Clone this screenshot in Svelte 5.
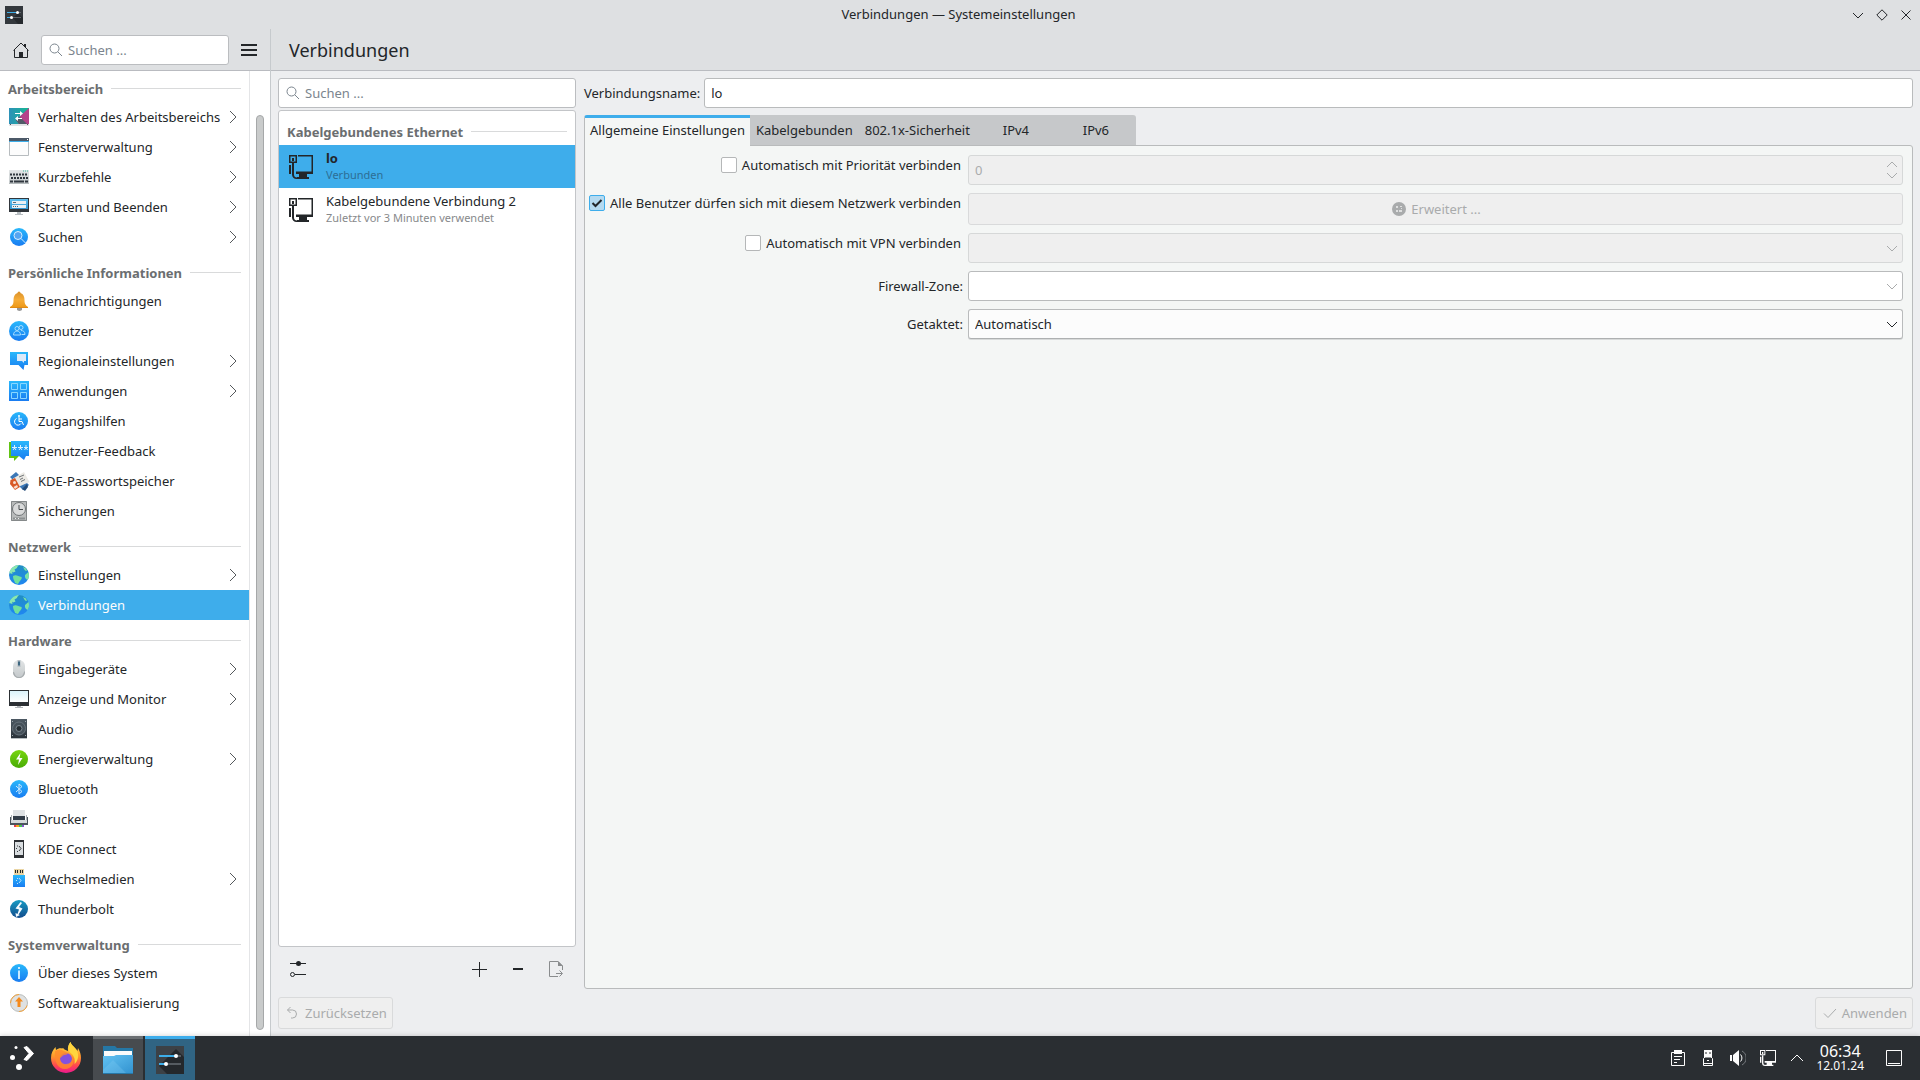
<script>
	const sections = [
		{
			title: 'Arbeitsbereich',
			items: [
				{ label: 'Verhalten des Arbeitsbereichs', icon: 'workspace', more: true },
				{ label: 'Fensterverwaltung', icon: 'window', more: true },
				{ label: 'Kurzbefehle', icon: 'keyboard', more: true },
				{ label: 'Starten und Beenden', icon: 'startup', more: true },
				{ label: 'Suchen', icon: 'search', more: true }
			]
		},
		{
			title: 'Persönliche Informationen',
			items: [
				{ label: 'Benachrichtigungen', icon: 'bell' },
				{ label: 'Benutzer', icon: 'users' },
				{ label: 'Regionaleinstellungen', icon: 'locale', more: true },
				{ label: 'Anwendungen', icon: 'apps', more: true },
				{ label: 'Zugangshilfen', icon: 'access' },
				{ label: 'Benutzer-Feedback', icon: 'feedback' },
				{ label: 'KDE-Passwortspeicher', icon: 'wallet' },
				{ label: 'Sicherungen', icon: 'backup' }
			]
		},
		{
			title: 'Netzwerk',
			items: [
				{ label: 'Einstellungen', icon: 'globe', more: true },
				{ label: 'Verbindungen', icon: 'globe' }
			]
		},
		{
			title: 'Hardware',
			items: [
				{ label: 'Eingabegeräte', icon: 'mouse', more: true },
				{ label: 'Anzeige und Monitor', icon: 'monitor', more: true },
				{ label: 'Audio', icon: 'audio' },
				{ label: 'Energieverwaltung', icon: 'power', more: true },
				{ label: 'Bluetooth', icon: 'bluetooth' },
				{ label: 'Drucker', icon: 'printer' },
				{ label: 'KDE Connect', icon: 'phone' },
				{ label: 'Wechselmedien', icon: 'usb', more: true },
				{ label: 'Thunderbolt', icon: 'thunderbolt' }
			]
		},
		{
			title: 'Systemverwaltung',
			items: [
				{ label: 'Über dieses System', icon: 'info' },
				{ label: 'Softwareaktualisierung', icon: 'update' }
			]
		}
	];

	const connections = [
		{ name: 'lo', status: 'Verbunden' },
		{ name: 'Kabelgebundene Verbindung 2', status: 'Zuletzt vor 3 Minuten verwendet' }
	];

	const tabs = ['Allgemeine Einstellungen', 'Kabelgebunden', '802.1x-Sicherheit', 'IPv4', 'IPv6'];

	let page = $state('Verbindungen');
	let connection = $state('lo');
	let tab = $state(tabs[0]);
	let connectionName = $state('lo');
	let autoConnect = $state(false);
	let allUsers = $state(true);
	let autoVpn = $state(false);
</script>

<svelte:head>
	<title>Verbindungen — Systemeinstellungen</title>
</svelte:head>

{#snippet magnifier()}
	<svg class="magnifier" width="14" height="14" viewBox="0 0 14 14" fill="none" stroke="currentColor">
		<circle cx="5.5" cy="5.5" r="4.5" />
		<path d="M8.8 8.8 13 13" />
	</svg>
{/snippet}

{#snippet chevron(dir)}
	<svg class="chevron" width="12" height="7" viewBox="0 0 12 7" fill="none" stroke="currentColor">
		<path d={dir === 'up' ? 'M1 6 6 1l5 5' : 'M1 1l5 5 5-5'} />
	</svg>
{/snippet}

{#snippet wired(size)}
	<svg width={size} height={size} viewBox="0 0 24 24" fill="currentColor">
		<path d="M0 0h8v8H0zM1.500 1.500v5h5v-5z" fill-rule="evenodd" />
		<path d="M3 3h2v3H3zM0 10h2v9H0zM3 8h2v11.500A3 3 0 0 0 8 22.500h2V24H7.500A4.500 4.500 0 0 1 3 19.500z" />
		<path d="M9 0h15v19H7v-2.500h15.500V1.500H9zM10 19h8v3h2v2H8v-2h2z" />
	</svg>
{/snippet}

{#snippet icon(name)}
	<svg class="icon" width="22" height="22" viewBox="0 0 22 22" fill="none">
		{#if name === 'workspace'}
			<path d="M1 2h20v16H1z" fill="url(#teal)" />
			<path d="M21 2v16H11l-3-4z" fill="#b5438a" />
			<path d="M8 14l4-3 7 7H11z" fill="#515a68" />
			<path d="M1 18h20v2H1z" fill="#e3e5e7" />
			<path d="M2 18h1v1H2zM19 18h1v1h-1z" fill="#555" />
			<path d="M7 7.500h6M14 12.500H9" stroke="#fff" />
			<path d="M12 5l3 2.500-3 2.500zM10 10l-3 2.500 3 2.500z" fill="#fff" />
		{:else if name === 'window'}
			<path d="M1.500 2.500h19v17h-19z" fill="#fcfcfc" stroke="#b7bcbf" />
			<path d="M1 2h20v3H1z" fill="#4c5968" />
			<path d="M1 5h20v1H1z" fill="#3daee9" />
			<path d="M19 3h1v1h-1z" fill="#fff" />
		{:else if name === 'keyboard'}
			<path d="M1 4h20v14H1z" fill="url(#silver)" />
			<path d="M15 5h1M17 5h1M19 5h1" stroke="#3bb89d" />
			<path d="M2 8.500h18M3 12h17" stroke="#30373e" stroke-width="2" stroke-dasharray="2 1" />
			<path d="M2 15.500h3m1 0h10m1 0h3" stroke="#30373e" stroke-width="2" />
			<path d="M1 17.500h20" stroke="#b4babb" />
		{:else if name === 'startup'}
			<path d="M1 2h20v14H1z" fill="#31363b" />
			<path d="M2 3h18v10H2z" fill="url(#sky)" />
			<path d="M4 5h14v3H4zM4 9h14v3H4z" fill="#e9f0f3" />
			<path d="M5 6.500h3M5 10.500h1m1 0h1m1 0h1" stroke="#586977" />
			<path d="M9 16h4v2h2v1H7v-1h2z" fill="#b7bdc1" />
		{:else if name === 'search'}
			<circle cx="11" cy="11" r="9" fill="url(#blue)" />
			<circle cx="10" cy="9.500" r="4" fill="#55a5f1" stroke="#d7eeff" />
			<path d="M13 12.500l4.500 4.500" stroke="#d7eeff" />
		{:else if name === 'bell'}
			<path d="M9 18h5v1.500a2.500 1.500 0 0 1-5 0z" fill="#979797" />
			<path d="M9.500 3a1.500 1.500 0 0 1 3 0c3 1 4 4 4 7 0 4 1 5 3.500 7v1H2v-1c3-2 3.500-3 3.500-7 0-3 1-6 4-7z" fill="url(#orange)" />
			<path d="M2 17h18v1H2z" fill="#e18a12" />
		{:else if name === 'users'}
			<circle cx="11" cy="11" r="10" fill="url(#blue)" />
			<g stroke="#a6dcff">
				<circle cx="9" cy="8.500" r="2" />
				<circle cx="13" cy="7.500" r="2" />
				<path d="M5.500 15c0-3 2-4 3.500-4s3.500 1 3.500 4zM13 10.500c2 0 4 1 4 4h-3.500" />
			</g>
		{:else if name === 'locale'}
			<path d="M2 2h18v13h-3.500l-1 5-5-5H2z" fill="url(#blue)" />
			<path d="M9 4h9v7h-2v2l-2-2H9z" fill="#dbeaf9" />
		{:else if name === 'apps'}
			<path d="M1 1h20v20H1z" fill="url(#blue)" />
			<path d="M3.500 3.500h6v6h-6zM12.500 3.500h6v6h-6zM3.500 12.500h6v6h-6zM12.500 12.500h6v6h-6z" stroke="#89d7ff" />
		{:else if name === 'access'}
			<circle cx="11" cy="11" r="9" fill="url(#blue)" />
			<path d="M8.500 8.500a3.500 3.500 0 1 0 4.500 5" stroke="#fff" />
			<path d="M11 7v4.500h3l1.500 3.500M11 9h3" stroke="#fff" />
			<circle cx="11" cy="6" r="1" fill="#fff" />
		{:else if name === 'feedback'}
			<path d="M1 2h3v14h7l-5 5v-3H1z" fill="#62c413" />
			<path d="M3 1h18v15h-3l-2 4-5-4H3z" fill="url(#blue)" />
			<path d="M4 7.500h5M10 7.500h5M16 7.500h4M6.500 5v4M12.500 5v4M18 5v4M5 10l1.500-2L8 10M11 10l1.500-2 1.500 2M16.500 10 18 8l1.500 2" stroke="#d7f1ff" />
		{:else if name === 'wallet'}
			<path d="M2 7 8 2l13 13-6 5z" fill="#3c78b7" />
			<path d="M5 8.500 16 2l5.500 10L10 17z" fill="#eceae5" />
			<path d="M2.500 10 7 8l5 9-5 3-5-6z" fill="#d95a27" />
			<circle cx="6.500" cy="12.500" r="1.500" fill="#f7dfd2" />
			<path d="M5.500 17l3.500-2 1 2-3 2z" fill="#f7dfd2" />
			<path d="M11 7l5-2M12 9.500l3-1.500M13 11.500l4-2" stroke="#6f7478" />
			<path d="M14 19l5-5 1 3-3 4z" fill="#244c7a" />
		{:else if name === 'backup'}
			<path d="M3 1h16v20H3z" fill="#b9bbbb" />
			<path d="M3.500 1.500h15v19h-15z" stroke="#85898a" />
			<circle cx="11" cy="9" r="6.500" fill="#d9dada" stroke="#6f7375" />
			<path d="M11 5v4.500h4" stroke="#4a4e50" />
			<path d="M5 17.500h12v2H5z" fill="#8c9091" />
			<path d="M7 18.500h1m2 0h1" stroke="#eee" />
		{:else if name === 'globe'}
			<circle cx="11" cy="11" r="10" fill="url(#ocean)" />
			<path d="M1.300 9C2 5 6 1 11 1c-1 1-2 2-2 3l-2.500 1.500 1 2L5 8.500l-1-1L4.500 10z" fill="#8ae8ae" />
			<path d="M5 12c3-2 5 0 8.500 1 1 1-.5 3-2 4.500L10 20l-3-1c0-2-2-3-2-7z" fill="#6fe09c" />
			<path d="M20.500 8c1 3 .5 6-1 8-2-1-3-3-2.500-5zM15 3l3 1.500 1 2.500-2-.5z" fill="#7be3a5" />
		{:else if name === 'mouse'}
			<rect x="5" y="2" width="12" height="18" rx="6" fill="url(#silver)" />
			<path d="M6 14c1 3 2 5 5 5s4-2 5-5v-1l1 1c0 4-3 6-6 6s-6-2-6-6z" fill="#a8adaf" />
			<path d="M11 2v7" stroke="#b5bec5" stroke-width="3" />
			<path d="M11 3.500v4" stroke="#3e6780" stroke-width="2" />
		{:else if name === 'monitor'}
			<path d="M1 2h20v16H1z" fill="#2c3034" />
			<path d="M2 3h18v11H2z" fill="url(#screen)" />
			<path d="M9 18h4v1h2v1H7v-1h2z" fill="#b2b6b9" />
		{:else if name === 'audio'}
			<path d="M3 1h16v19H3z" fill="url(#dark)" />
			<circle cx="11" cy="10.500" r="6.500" fill="#46515a" stroke="#67737c" />
			<circle cx="11" cy="10.500" r="3" fill="#252d33" stroke="#7d8991" />
			<path d="M4 3h1v1H4zM17 3h1v1h-1zM4 17h1v1H4zM17 17h1v1h-1z" fill="#9ca7ae" />
			<path d="M3 20h16v1H3z" fill="#b9bfc2" />
		{:else if name === 'power'}
			<circle cx="11" cy="11" r="9" fill="url(#green)" />
			<path d="M12.500 5 8 11.500h3L10 17l4.500-7H11.500z" fill="#fff" />
		{:else if name === 'bluetooth'}
			<circle cx="11" cy="11" r="9" fill="url(#blue)" />
			<path d="M8 8l6 5.500-3 2.500V6l3 2.500L8 14" stroke="#cbe9ff" />
		{:else if name === 'printer'}
			<path d="M5 2h12v8H5z" fill="#dfe2e4" />
			<path d="M3 7h1v6h14V7h1v10H3z" fill="#aab0b4" />
			<path d="M5 8h12v4H5z" fill="#333d48" />
			<path d="M2 9h1v6h16V9h1v8H2z" fill="#4b545c" />
			<path d="M3 12h16v3H3z" fill="#d5d9db" />
			<path d="M6 17h3v2H6z" fill="#e43a50" />
			<path d="M8 17h3v2H8z" fill="#f7a51c" />
			<path d="M11 17h3v2h-3z" fill="#44c552" />
			<path d="M14 17h2v2h-2z" fill="#8353d3" />
		{:else if name === 'phone'}
			<path d="M6 2h10v18H6z" fill="#2d3034" />
			<path d="M7 4h8v13H7z" fill="#d9dde0" />
			<path d="M11 8l2 2.500-2 2.500" stroke="#383c40" />
			<path d="M8 10h1v1H8zM9 7.500h1v1H9zM9 13h1v1H9z" fill="#383c40" />
		{:else if name === 'usb'}
			<path d="M6 1h10v6H6z" fill="#ead5a4" />
			<path d="M7 2h1v3H7zM9 2h1v3H9zM12 2h1v3h-1zM14 2h1v3h-1z" fill="#25292c" />
			<path d="M5 7h12v12H5z" fill="url(#blue)" />
			<path d="M11 10l2 2.500-2 2.500" stroke="#bfe4ff" />
			<path d="M8 12h1v1H8zM9 10h1v1H9zM9 15h1v1H9z" fill="#bfe4ff" />
		{:else if name === 'thunderbolt'}
			<circle cx="11" cy="11" r="9" fill="url(#navy)" />
			<path d="M12.500 4 7.500 10.500l3.500 1L9.500 16l-2-1 .5 4 4-2-1.500-.5 4-6-3.500-1.500 3-4z" fill="#f4fbff" />
		{:else if name === 'info'}
			<circle cx="11" cy="11" r="9" fill="url(#blue)" />
			<path d="M10 5h2v2h-2zM10 8.500h2V17h-2z" fill="#c9e9ff" />
		{:else if name === 'update'}
			<circle cx="11" cy="11" r="8.500" fill="#dfe1e1" stroke="#b9bdbd" />
			<path d="M11 2.500a8.500 8.500 0 0 0-8.500 8.500M11 19.500a8.500 8.500 0 0 0 8-6" stroke="#f5a43d" />
			<path d="M11 5 7 9.500h2.500V15h3V9.500H15z" fill="#f58a1b" />
		{/if}
	</svg>
{/snippet}

<!-- shared gradients for the icon set -->
<svg class="defs" width="0" height="0" aria-hidden="true">
	<defs>
		<linearGradient id="blue" x2="0" y2="1"><stop stop-color="#29b8fb" /><stop offset="1" stop-color="#197cf1" /></linearGradient>
		<linearGradient id="sky" x2="0" y2="1"><stop stop-color="#60c0ef" /><stop offset="1" stop-color="#3498d2" /></linearGradient>
		<linearGradient id="teal" x2="1" y2="0"><stop stop-color="#2d91b8" /><stop offset="1" stop-color="#16b892" /></linearGradient>
		<linearGradient id="silver" x2="0" y2="1"><stop stop-color="#e2e5e6" /><stop offset="1" stop-color="#c3c8ca" /></linearGradient>
		<linearGradient id="orange" x2="0" y2="1"><stop stop-color="#d9902a" /><stop offset=".5" stop-color="#f6ad38" /><stop offset="1" stop-color="#ec9716" /></linearGradient>
		<linearGradient id="ocean" x2="0" y2="1"><stop stop-color="#218fc2" /><stop offset="1" stop-color="#1f86f3" /></linearGradient>
		<linearGradient id="screen" x2="0" y2="1"><stop stop-color="#daf3fb" /><stop offset="1" stop-color="#fff" /></linearGradient>
		<linearGradient id="dark" x2="0" y2="1"><stop stop-color="#4d5963" /><stop offset="1" stop-color="#2b333a" /></linearGradient>
		<linearGradient id="green" x2="0" y2="1"><stop stop-color="#78d60e" /><stop offset="1" stop-color="#48ab05" /></linearGradient>
		<linearGradient id="navy" x2="0" y2="1"><stop stop-color="#169cc4" /><stop offset="1" stop-color="#124b8c" /></linearGradient>
		<linearGradient id="fox" x2="0" y2="1"><stop stop-color="#ffe34a" /><stop offset=".45" stop-color="#ff9a2b" /><stop offset=".75" stop-color="#ff4a4d" /><stop offset="1" stop-color="#ec1790" /></linearGradient>
		<linearGradient id="folder" x2="1" y2="1"><stop stop-color="#62c2f2" /><stop offset="1" stop-color="#3393d0" /></linearGradient>
	</defs>
</svg>

<div class="desktop">
	<header class="titlebar">
		<svg width="18" height="18" viewBox="0 0 18 18" fill="none">
			<path d="M0 0h18v18H0z" fill="#33383d" />
			<path d="M8 12 13 7l5 5v6h-5z" fill="#25292d" />
			<path d="M2 6.500h10M2 11.500h4" stroke="#3daee9" />
			<path d="M13 6.500h3M7 11.500h9" stroke="#61676c" />
			<circle cx="12.500" cy="6.500" r="1.500" fill="#fff" />
			<circle cx="6.500" cy="11.500" r="1.500" fill="#fff" />
		</svg>
		<span class="caption">Verbindungen — Systemeinstellungen</span>
		<div class="window-buttons">
			<button aria-label="Minimieren"><svg width="12" height="12" viewBox="0 0 12 12"><path d="M1 4l5 5 5-5" /></svg></button>
			<button aria-label="Maximieren"><svg width="12" height="12" viewBox="0 0 12 12"><path d="M6 .8 11.200 6 6 11.200.8 6z" /></svg></button>
			<button aria-label="Schließen"><svg width="12" height="12" viewBox="0 0 12 12"><path d="M1.500 1.500l9 9M10.500 1.500l-9 9" /></svg></button>
		</div>
	</header>

	<div class="window">
		<aside class="sidebar">
			<div class="toolbar">
				<button class="tool" aria-label="Übersicht">
					<svg width="16" height="16" viewBox="0 0 16 16" fill="none" stroke="#232629">
						<path d="M.5 8.500 8 1l7.500 7.500M1.500 8v7.500h13V8" />
						<path d="M6 10h4v6H6zM11 2h2v4l-2-2z" fill="#232629" stroke="none" />
					</svg>
				</button>
				<label class="search">
					{@render magnifier()}
					<input type="text" placeholder="Suchen ..." aria-label="Einstellungen durchsuchen" />
				</label>
				<button class="tool" aria-label="Menü">
					<svg width="16" height="12" viewBox="0 0 16 12"><path d="M0 0h16v2H0zM0 5h16v2H0zM0 10h16v2H0z" fill="#232629" /></svg>
				</button>
			</div>
			<div class="sidebar-body">
				<nav>
					{#each sections as section}
						<h2 class="section-title">{section.title}</h2>
						{#each section.items as item}
							<button class="nav-item" class:selected={item.label === page} onclick={() => (page = item.label)}>
								{@render icon(item.icon)}
								<span>{item.label}</span>
								{#if item.more}
									<svg class="more" width="8" height="14" viewBox="0 0 8 14" fill="none" stroke="#55595c"><path d="M1 1l6 6-6 6" /></svg>
								{/if}
							</button>
						{/each}
					{/each}
				</nav>
				<div class="scrollbar"><div class="handle"></div></div>
			</div>
		</aside>

		<main>
			<div class="toolbar"><h1>Verbindungen</h1></div>

			<div class="content">
				<section class="connections">
					<label class="search">
						{@render magnifier()}
						<input type="text" placeholder="Suchen ..." aria-label="Verbindungen durchsuchen" />
					</label>
					<div class="list">
						<h2 class="section-title">Kabelgebundenes Ethernet</h2>
						{#each connections as conn}
							<button class="connection" class:selected={conn.name === connection} onclick={() => (connection = conn.name)}>
								{@render wired(24)}
								<span class="details">
									<span class="name">{conn.name}</span>
									<span class="status">{conn.status}</span>
								</span>
							</button>
						{/each}
					</div>
					<div class="list-actions">
						<button class="configure" aria-label="Einrichten">
							<svg width="16" height="16" viewBox="0 0 16 16" fill="none" stroke="#232629">
								<path d="M0 2.500h16M5 13.500h11" />
								<circle cx="8.500" cy="2.500" r="2.500" fill="#232629" stroke="none" />
								<circle cx="2.500" cy="13.500" r="2" />
							</svg>
						</button>
						<button aria-label="Verbindung hinzufügen"><svg width="16" height="16" viewBox="0 0 16 16"><path d="M7.500 1v15M0 8.500h15" stroke="#232629" /></svg></button>
						<button aria-label="Verbindung entfernen"><svg width="16" height="16" viewBox="0 0 16 16"><path d="M3 7h10v2H3z" fill="#232629" /></svg></button>
						<button aria-label="Verbindung exportieren">
							<svg width="16" height="16" viewBox="0 0 16 16" fill="none" stroke="#8a8c8e">
								<path d="M10 15.500H1.500V.5h8.500l4.500 4.500v4M8 12.500h6M11.500 9.500l3 3-3 3" />
								<path d="M10 0v5h5z" fill="#8a8c8e" stroke="none" />
							</svg>
						</button>
					</div>
				</section>

				<section class="editor">
					<div class="name-row">
						<label for="connection-name">Verbindungsname:</label>
						<input id="connection-name" class="field" type="text" bind:value={connectionName} />
					</div>
					<div class="tabs" role="tablist">
						{#each tabs as t}
							<button role="tab" aria-selected={t === tab} class:active={t === tab} onclick={() => (tab = t)}>{t}</button>
						{/each}
					</div>
					<div class="tab-page">
						<label class="check">
							<input type="checkbox" bind:checked={autoConnect} />
							Automatisch mit Priorität verbinden
						</label>
						<div class="control">
							<input class="field" type="number" value="0" disabled aria-label="Priorität" />
							<span class="arrows spin">{@render chevron('up')}{@render chevron('down')}</span>
						</div>

						<label class="check">
							<input type="checkbox" bind:checked={allUsers} />
							Alle Benutzer dürfen sich mit diesem Netzwerk verbinden
						</label>
						<button class="push" disabled>
							<svg width="14" height="14" viewBox="0 0 14 14">
								<circle cx="7" cy="7" r="7" fill="#a9abac" />
								<path d="M4 4h2v2H4zM8 4h2v1H8zM9 6h1v1H9zM4 8h2v2H4zM7 8h3v2H7z" fill="#dedfdf" />
							</svg>
							Erweitert ...
						</button>

						<label class="check">
							<input type="checkbox" bind:checked={autoVpn} />
							Automatisch mit VPN verbinden
						</label>
						<div class="control">
							<select class="field" disabled aria-label="VPN"><option></option></select>
							<span class="arrows">{@render chevron('down')}</span>
						</div>

						<label class="text-label" for="zone">Firewall-Zone:</label>
						<div class="control">
							<select id="zone" class="field"><option></option></select>
							<span class="arrows">{@render chevron('down')}</span>
						</div>

						<label class="text-label" for="metered">Getaktet:</label>
						<div class="control">
							<select id="metered" class="field raised"><option>Automatisch</option></select>
							<span class="arrows strong">{@render chevron('down')}</span>
						</div>
					</div>
				</section>
			</div>

			<footer>
				<button class="push" disabled>
					<svg width="14" height="14" viewBox="0 0 14 14" fill="none" stroke="currentColor"><path d="M4.500 1 1.500 4l3 3M1.500 4h5a4 4 0 0 1 0 8H5" /></svg>
					Zurücksetzen
				</button>
				<button class="push" disabled>
					<svg width="14" height="14" viewBox="0 0 14 14" fill="none" stroke="currentColor"><path d="M1 7.500l4 4L13 3" /></svg>
					Anwenden
				</button>
			</footer>
		</main>
	</div>

	<div class="taskbar">
		<button class="launcher" aria-label="Anwendungsstarter">
			<svg width="24" height="26" viewBox="0 0 24 26" fill="#fff">
				<circle cx="6" cy="2.500" r="1.500" />
				<circle cx="2.500" cy="12.500" r="2.500" />
				<circle cx="9" cy="22" r="3" />
				<path d="M14 2.500 17 1.500 23.500 8.500 17 15.500l-3-1L19 8.500z" stroke="#fff" stroke-width="1" />
			</svg>
		</button>
		<button class="launcher" aria-label="Firefox">
			<svg width="30" height="32" viewBox="0 0 30 32">
				<path d="M19.500 0c.5 2.500 2.500 4 4.500 6 1 1 2 2 2.500 3l.5-3c2 3 3 7 3 10a15 15 0 0 1-30 0C0 11 2 8 4.500 5l.5 3c2-1.500 4-2 6-1.500 1-.5 2 0 2.500 1L17 9c-.5-4 .5-7 2.500-9z" fill="url(#fox)" />
				<circle cx="15" cy="17" r="6" fill="#8351df" />
				<path d="M4 9c3-2 6-2 9 0l4 2c-1 2-3 2-4 2-2 1-2 2-4 3 0 4 3 6 6 6 4 0 7-3 6-8 4 6 0 13-7 13S3 20 4 9z" fill="#ff8b2c" opacity=".8" />
				<path d="M19.500 0c.5 3 5 5 7 10 2 6-1 10-3 12 1-6-1-9-5-12-2-3-1-7 1-10z" fill="#ffd53e" />
			</svg>
		</button>
		<button class="task" aria-label="Dolphin">
			<svg width="30" height="28" viewBox="0 0 30 28">
				<path d="M0 0h12l2 2h16v12H0z" fill="#2577a5" />
				<path d="M1 5h28v8H1z" fill="#fbfbfb" />
				<path d="M0 10h11l2-1h17v18H0z" fill="url(#folder)" />
				<path d="M10 14l13 13H0v-3z" fill="#8cd5f6" opacity=".25" />
				<path d="M0 27h30v1H0z" fill="#2778a8" />
			</svg>
		</button>
		<button class="task current" aria-label="Systemeinstellungen">
			<svg width="28" height="28" viewBox="0 0 28 28">
				<path d="M0 0h28v28H0z" fill="#3c4146" />
				<path d="M3 20 20 3l8 8v17H11z" fill="#24282c" />
				<path d="M3 9h16v2H3zM3 17h6v2H3z" fill="#3daee9" />
				<path d="M21 9h4v2h-4zM11 17h14v2H11z" fill="#555b61" />
				<circle cx="20" cy="10" r="2" fill="#fff" />
				<circle cx="10" cy="18" r="2" fill="#fff" />
			</svg>
		</button>
		<div class="tray">
			<button aria-label="Zwischenablage">
				<svg width="16" height="16" viewBox="0 0 16 16" fill="none" stroke="#fcfcfc">
					<path d="M1.500 2.500h13v13h-13z" />
					<path d="M4 0h8v4H4z" fill="#fcfcfc" stroke="none" />
					<path d="M4 6.500h8M4 9.500h6M4 12.500h3" />
				</svg>
			</button>
			<button aria-label="Geräte">
				<svg width="16" height="16" viewBox="0 0 16 16" fill="none" stroke="#fcfcfc">
					<path d="M4 0h8v7H4zM5.500 2v2h1V2zM9.500 2v2h1V2z" fill="#fcfcfc" stroke="none" fill-rule="evenodd" />
					<path d="M3.500 8.500 5 7h6l1.500 1.500v7h-9zM4 13.500h8M7 10.500h2" />
				</svg>
			</button>
			<button aria-label="Lautstärke">
				<svg width="16" height="16" viewBox="0 0 16 16" fill="none">
					<path d="M0 5h2v6H0zM3 5l6-5v16l-6-5z" fill="#fcfcfc" />
					<path d="M10.500 4.500a5 5 0 0 1 0 7" stroke="#fcfcfc" />
					<path d="M12 1a8 8 0 0 1 0 14" stroke="#777b7f" />
				</svg>
			</button>
			<button aria-label="Netzwerke">{@render wired(16)}</button>
			<button aria-label="Weitere Symbole">
				<svg width="14" height="8" viewBox="0 0 14 8" fill="none" stroke="#fcfcfc"><path d="M1 7l6-6 6 6" /></svg>
			</button>
		</div>
		<div class="clock">
			<time class="time">06:34</time>
			<span class="date">12.01.24</span>
		</div>
		<button class="show-desktop" aria-label="Arbeitsfläche anzeigen">
			<svg width="16" height="16" viewBox="0 0 16 16" fill="none" stroke="#fcfcfc"><path d="M.5.5h15v15H.5zM2 13.500h12" /></svg>
		</button>
	</div>
</div>

<style>
	:global(body) {
		margin: 0;
		background: #edeef0;
	}

	.desktop {
		display: flex;
		flex-direction: column;
		height: 100vh;
		font-family: 'Noto Sans', sans-serif;
		font-size: 13px;
		line-height: 18px;
		color: #232629;
	}

	.desktop * {
		box-sizing: border-box;
	}

	.defs {
		position: absolute;
	}

	svg {
		display: block;
		flex: none;
	}

	h1,
	h2 {
		margin: 0;
	}

	button,
	input,
	select {
		font: inherit;
		color: inherit;
	}

	button {
		display: flex;
		align-items: center;
		margin: 0;
		padding: 0;
		border: none;
		background: none;
		text-align: left;
	}

	/* title bar */
	.titlebar {
		display: grid;
		grid-template-columns: 1fr auto 1fr;
		align-items: center;
		height: 29px;
		padding: 0 8px 0 5px;
		background: #dee0e2;
	}

	.caption {
		padding-bottom: 2px;
	}

	.window-buttons {
		display: flex;
		justify-content: flex-end;
		gap: 12px;
	}

	.window-buttons path {
		fill: none;
		stroke: #232629;
	}

	.window {
		display: flex;
		flex: 1;
		min-height: 0;
	}

	.toolbar {
		display: flex;
		align-items: center;
		flex: none;
		height: 42px;
		border-bottom: 1px solid #b9bbc0;
		background: #dee0e2;
	}

	.tool {
		flex: none;
	}

	/* sidebar */
	.sidebar {
		display: flex;
		flex-direction: column;
		width: 271px;
		border-right: 1px solid #c6cacd;
		background: #fff;
	}

	.sidebar .toolbar {
		gap: 12px;
		padding: 0 13px;
	}

	.sidebar .toolbar .search {
		flex: 1;
		min-width: 0;
	}

	.sidebar-body {
		display: flex;
		flex: 1;
		min-height: 0;
	}

	nav {
		flex: 1;
		overflow: hidden;
		border-right: 1px solid #e4e5e7;
	}

	.section-title {
		display: flex;
		align-items: center;
		gap: 8px;
		height: 34px;
		padding: 7px 8px 0;
		font-size: 13px;
		font-weight: 700;
		color: #6b6e70;
	}

	.section-title::after {
		content: '';
		flex: 1;
		height: 1px;
		background: #d9dadb;
	}

	nav .section-title:first-child {
		height: 31px;
		padding-top: 4px;
	}

	.nav-item {
		width: 100%;
		height: 30px;
		gap: 8px;
		padding: 0 12px 0 8px;
	}

	.nav-item span {
		flex: 1;
		white-space: nowrap;
	}

	.selected {
		background: #3eadeb;
	}

	.nav-item.selected {
		color: #fcfcfc;
	}

	.scrollbar {
		display: flex;
		width: 20px;
		padding: 44px 6px 6px;
	}

	.handle {
		flex: 1;
		border: 1px solid #a6a8a9;
		border-radius: 4px;
		background: #c9cbcb;
	}

	/* inputs */
	.search {
		display: flex;
		align-items: center;
		gap: 5px;
		height: 30px;
		padding: 0 7px;
		border: 1px solid #bbbdc0;
		border-radius: 3px;
		background: #fff;
		color: #7b858e;
	}

	.search input {
		flex: 1;
		min-width: 0;
		padding: 0;
		border: none;
		outline: none;
		background: none;
	}

	.search input::placeholder {
		color: #7b858e;
		opacity: 1;
	}

	.field {
		width: 100%;
		height: 30px;
		margin: 0;
		padding: 0 6px;
		border: 1px solid #b9bbbc;
		border-radius: 3px;
		outline: none;
		background: #fff;
		appearance: none;
	}

	.field:disabled {
		border-color: #d6d8d8;
		background: #efefef;
		color: #aaacad;
		opacity: 1;
	}

	input[type='number']::-webkit-inner-spin-button {
		display: none;
	}

	.raised {
		border-bottom-color: #aeb0b1;
		background: #fcfcfc;
		box-shadow: 0 1px #d8dada;
	}

	.push {
		justify-content: center;
		gap: 5px;
		height: 32px;
		padding: 0 5px 0 7px;
		border: 1px solid #d9dadb;
		border-radius: 3px;
		background: #efefef;
	}

	.push:disabled {
		color: #a9abac;
	}

	/* main area */
	main {
		display: flex;
		flex: 1;
		flex-direction: column;
		min-width: 0;
		background: #edeef0;
	}

	h1 {
		padding-left: 18px;
		font-size: 18px;
		font-weight: 400;
		line-height: 24px;
	}

	.content {
		display: flex;
		flex: 1;
		min-height: 0;
		gap: 8px;
		padding: 7px 7px 8px;
	}

	.connections {
		display: flex;
		flex-direction: column;
		width: 298px;
	}

	.list {
		flex: 1;
		margin-top: 2px;
		border: 1px solid #c3c5c8;
		border-radius: 3px;
		background: #fff;
	}

	.connection {
		width: 100%;
		height: 43px;
		gap: 13px;
		padding: 0 10px;
	}

	.details {
		display: flex;
		flex-direction: column;
		padding-bottom: 2px;
	}

	.status {
		font-size: 11px;
		line-height: 16px;
		color: #87898b;
	}

	.selected .name {
		font-weight: 700;
	}

	.selected .status {
		color: #2d6d95;
	}

	.list-actions {
		display: flex;
		gap: 22px;
		padding: 14px 12px 12px;
	}

	.configure {
		margin-right: auto;
	}

	.editor {
		display: flex;
		flex: 1;
		flex-direction: column;
		min-width: 0;
	}

	.name-row {
		display: flex;
		align-items: center;
		gap: 4px;
	}

	.name-row .field {
		flex: 1;
	}

	.tabs {
		display: flex;
		margin-top: 7px;
	}

	.tabs button {
		justify-content: center;
		min-width: 80px;
		height: 30px;
		padding: 0 6px;
		background: #c6c8ca;
	}

	.tabs button:last-child {
		border-top-right-radius: 3px;
	}

	.tabs .active {
		position: relative;
		height: 31px;
		margin-bottom: -1px;
		padding: 0 5px 4px;
		border-top: 3px solid #3eadeb;
		border-left: 1px solid #b9bbbc;
		border-radius: 3px 0 0;
		background: #f4f6f5;
	}

	.tab-page {
		display: grid;
		flex: 1;
		grid-template-columns: 372px 1fr;
		align-content: start;
		gap: 8px 5px;
		padding: 9px 9px 9px 6px;
		border: 1px solid #b9bbbc;
		border-radius: 0 3px 3px;
		background: #f4f6f5;
	}

	.check {
		display: flex;
		align-items: center;
		justify-self: end;
		align-self: start;
		gap: 5px;
		height: 20px;
		padding-right: 2px;
		white-space: nowrap;
	}

	.check input {
		width: 16px;
		height: 16px;
		margin: 0;
		border: 1px solid #b5b7b8;
		border-radius: 2px;
		background: #fff;
		appearance: none;
	}

	.check input:checked {
		border-color: #3eadeb;
		background: #b5daf0 url("data:image/svg+xml,%3Csvg xmlns='http://www.w3.org/2000/svg' viewBox='0 0 14 14'%3E%3Cpath d='M2.500 7l3 3 6-6' fill='none' stroke='%23232629' stroke-width='2'/%3E%3C/svg%3E") center no-repeat;
	}

	.text-label {
		justify-self: end;
		align-self: center;
	}

	.control {
		position: relative;
	}

	.arrows {
		position: absolute;
		top: 0;
		right: 5px;
		bottom: 0;
		display: flex;
		flex-direction: column;
		justify-content: center;
		gap: 4px;
		color: #a9abac;
		pointer-events: none;
	}

	.strong {
		color: #232629;
	}

	footer {
		display: flex;
		justify-content: space-between;
		padding: 0 7px 7px;
	}

	/* task bar */
	.taskbar {
		display: flex;
		flex: none;
		align-items: center;
		height: 44px;
		padding-left: 10px;
		background: #2a2e32;
		box-shadow: 0 0 5px rgba(0, 0, 0, 0.2);
		color: #fcfcfc;
		z-index: 1;
	}

	.launcher:first-child {
		margin-right: 17px;
	}

	.task {
		justify-content: center;
		width: 50px;
		height: 44px;
		margin-left: 2px;
		border-top: 3px solid #6b6f72;
		background: #474b4f;
	}

	.launcher + .task {
		margin-left: 12px;
	}

	.task.current {
		border-top-color: #3eadeb;
		background: #306483;
	}

	.tray {
		display: flex;
		gap: 14px;
		margin-left: auto;
	}

	.clock {
		display: flex;
		flex-direction: column;
		align-items: center;
		margin: 0 22px 0 12px;
	}

	.time {
		font-size: 16px;
		line-height: 16px;
	}

	.date {
		font-size: 12px;
		line-height: 14px;
	}

	.show-desktop {
		margin-right: 18px;
	}
</style>
